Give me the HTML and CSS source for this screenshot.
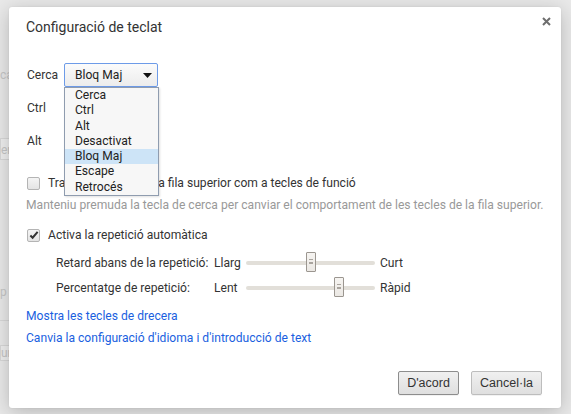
FILE: index.html
```html
<!DOCTYPE html>
<html lang="ca">
<head>
<meta charset="utf-8">
<title>Configuració de teclat</title>
<link rel="stylesheet" href="styles.css">
</head>
<body>
<div class="page">
  <div class="bg-item bg-t1">ca</div>
  <div class="bg-box bg-b1">er</div>
  <div class="bg-item bg-t2">p</div>
  <div class="bg-line"></div>
  <div class="bg-box bg-b2">ur</div>
</div>

<div class="dialog">
  <div class="title-row">
    <h1 class="title">Configuració de teclat</h1>
    <svg class="close" width="9" height="9" viewBox="0 0 9 9"><path d="M1 1L8 8M8 1L1 8" stroke="#6e6e6e" stroke-width="2" fill="none"/></svg>
  </div>

  <div class="keys">
    <div class="key-row">
      <span class="key-label">Cerca</span>
      <div class="select-wrap">
        <div class="select"><span>Bloq Maj</span><svg class="arrow" width="9" height="5" viewBox="0 0 9 5"><path d="M0 0H9L4.5 5Z" fill="#111"/></svg></div>
        <ul class="dropdown">
          <li>Cerca</li>
          <li>Ctrl</li>
          <li>Alt</li>
          <li>Desactivat</li>
          <li class="hl">Bloq Maj</li>
          <li>Escape</li>
          <li>Retrocés</li>
        </ul>
      </div>
    </div>
    <div class="key-row"><span class="key-label">Ctrl</span></div>
    <div class="key-row"><span class="key-label">Alt</span></div>
  </div>

  <div class="check-row first">
    <span class="checkbox"></span>
    <span>Tracta les tecles de la fila superior com a tecles de funció</span>
  </div>
  <div class="desc">Manteniu premuda la tecla de cerca per canviar el comportament de les tecles de la fila superior.</div>

  <div class="check-row second">
    <span class="checkbox checked"><svg width="11" height="10" viewBox="0 0 11 10"><path d="M1.5 5.5L4 8L9.5 1.5" stroke="#333" stroke-width="2.2" fill="none"/></svg></span>
    <span>Activa la repetició automàtica</span>
  </div>

  <div class="slider-row first">
    <span class="s-label">Retard abans de la repetició:</span>
    <span class="s-min">Llarg</span>
    <div class="track"><span class="thumb" style="left:60px"></span></div>
    <span class="s-max">Curt</span>
  </div>
  <div class="slider-row second">
    <span class="s-label">Percentatge de repetició:</span>
    <span class="s-min">Lent</span>
    <div class="track"><span class="thumb" style="left:88px"></span></div>
    <span class="s-max">Ràpid</span>
  </div>

  <a class="link first" href="#">Mostra les tecles de drecera</a>
  <a class="link second" href="#">Canvia la configuració d'idioma i d'introducció de text</a>

  <div class="buttons">
    <button class="btn focus">D'acord</button>
    <button class="btn">Cancel·la</button>
  </div>
</div>
</body>
</html>
```

FILE: styles.css
```css
html, body {
  margin: 0;
  padding: 0;
}
body {
  width: 571px;
  height: 414px;
  overflow: hidden;
  background: #e9e9e9;
  font-family: Roboto, "Liberation Sans", sans-serif;
  font-size: 12.1px;
  color: #333;
  position: relative;
}

/* faint page behind the overlay */
.page {
  display: flex;
  flex-direction: column;
  align-items: flex-start;
  color: #c6c6c6;
  font-size: 12px;
}
.bg-item { margin-left: 0; line-height: 16px; }
.bg-t1 { margin-top: 67px; }
.bg-box {
  width: 30px;
  height: 22px;
  line-height: 22px;
  border: 1px solid #d8d8d8;
  background: #efefef;
  padding-left: 0;
  box-sizing: border-box;
}
.bg-b1 { margin-top: 55px; }
.bg-t2 { margin-top: 124px; }
.bg-line { margin-top: 20px; height: 1px; width: 10px; background: #d8d8d8; }
.bg-b2 { margin-top: 24px; height: 16px; line-height: 14px; }

.dialog {
  position: absolute;
  left: 9px;
  top: 7px;
  width: 552px;
  height: 401px;
  box-sizing: border-box;
  background: #fff;
  border-radius: 3px;
  box-shadow: 0 4px 20px rgba(0, 0, 0, 0.22), 0 0 2px rgba(0,0,0,0.08);
  padding: 10px 19px 12px 17px;
  display: flex;
  flex-direction: column;
}

.title-row {
  display: flex;
  justify-content: space-between;
  align-items: flex-start;
  height: 20px;
}
.title {
  margin: 0;
  font-size: 14px;
  font-weight: normal;
  line-height: 20px;
  color: #333;
}
.close {
  margin-top: 0;
  margin-right: -9px;
}

.keys {
  margin-top: 26px;
  display: flex;
  flex-direction: column;
  gap: 9px;
}
.key-row {
  display: flex;
  align-items: center;
  height: 24px;
}
.key-label {
  width: 38px;
  padding-left: 1px;
  box-sizing: border-box;
}
.select-wrap {
  position: relative;
}
.select {
  width: 94px;
  height: 24px;
  box-sizing: border-box;
  border: 1px solid #6d9be8;
  border-radius: 2px;
  background: linear-gradient(#fbfbfb, #ececec);
  display: flex;
  align-items: center;
  justify-content: space-between;
  padding: 0 5px 0 10px;
  color: #222;
}
.arrow { margin-top: 1px; }
.dropdown {
  position: absolute;
  left: 0;
  top: 24px;
  width: 95px;
  box-sizing: border-box;
  margin: 0;
  padding: 0;
  list-style: none;
  background: #f7f7f7;
  border: 1px solid #8f9caf;
  box-shadow: 1px 1px 2px rgba(0,0,0,0.12);
  z-index: 2;
}
.dropdown li {
  height: 15.3px;
  line-height: 15.3px;
  padding-left: 10px;
  color: #222;
}
.dropdown li.hl {
  background: #cde4f7;
}

.check-row {
  display: flex;
  align-items: center;
  height: 20px;
  gap: 8px;
  padding-left: 1px;
}
.check-row.first { margin-top: 20px; }
.check-row.second { margin-top: 11px; }
.checkbox {
  width: 13px;
  height: 13px;
  box-sizing: border-box;
  border: 1px solid #b4b4b4;
  border-radius: 2px;
  background: linear-gradient(#f4f4f4, #e4e4e4);
  display: flex;
  align-items: center;
  justify-content: center;
}
.checkbox svg { margin-left: 1px; }

.desc {
  margin-top: 3px;
  line-height: 18px;
  height: 18px;
  color: #999;
  white-space: nowrap;
}

.slider-row {
  display: flex;
  align-items: center;
  height: 22px;
  padding-left: 30px;
  white-space: nowrap;
}
.slider-row.first { margin-top: 7px; }
.slider-row.second { margin-top: 3px; }
.s-label { width: 158px; }
.s-min { width: 32px; }
.track {
  position: relative;
  width: 129px;
  height: 4px;
  background: #e2dfd9;
  border-radius: 2px;
}
.thumb {
  position: absolute;
  top: -9px;
  width: 8px;
  height: 18px;
  border: 1px solid #9b9690;
  border-radius: 1px;
  background: linear-gradient(#f6f4f1, #ebe8e4) ;
}
.thumb::after {
  content: "";
  position: absolute;
  left: 2px;
  top: 6px;
  width: 4px;
  height: 5px;
  border-top: 1px solid #a9a49e;
  border-bottom: 1px solid #a9a49e;
  background: linear-gradient(transparent 2px, #a9a49e 2px, #a9a49e 3px, transparent 3px);
  box-sizing: border-box;
}
.s-max { margin-left: 5px; }

.link {
  display: block;
  line-height: 18px;
  height: 18px;
  color: #1a5fe0;
  text-decoration: none;
  align-self: flex-start;
}
.link.first { margin-top: 8px; }
.link.second { margin-top: 4px; }

.buttons {
  margin-top: 24px;
  display: flex;
  justify-content: flex-end;
  gap: 12px;
}
.btn {
  height: 24px;
  box-sizing: border-box;
  padding: 0;
  font-family: "Liberation Sans", Arial, sans-serif;
  font-size: 12.5px;
  color: #333;
  border: 1px solid #bdbdbd;
  border-radius: 2px;
  background: linear-gradient(#f0f0f0, #dfdfdf);
  box-shadow: 0 1px 0 rgba(0,0,0,0.05);
}
.btn.focus {
  border-color: #8d8d8d;
  width: 61px;
}
.btn:not(.focus) { width: 71px; }
```
